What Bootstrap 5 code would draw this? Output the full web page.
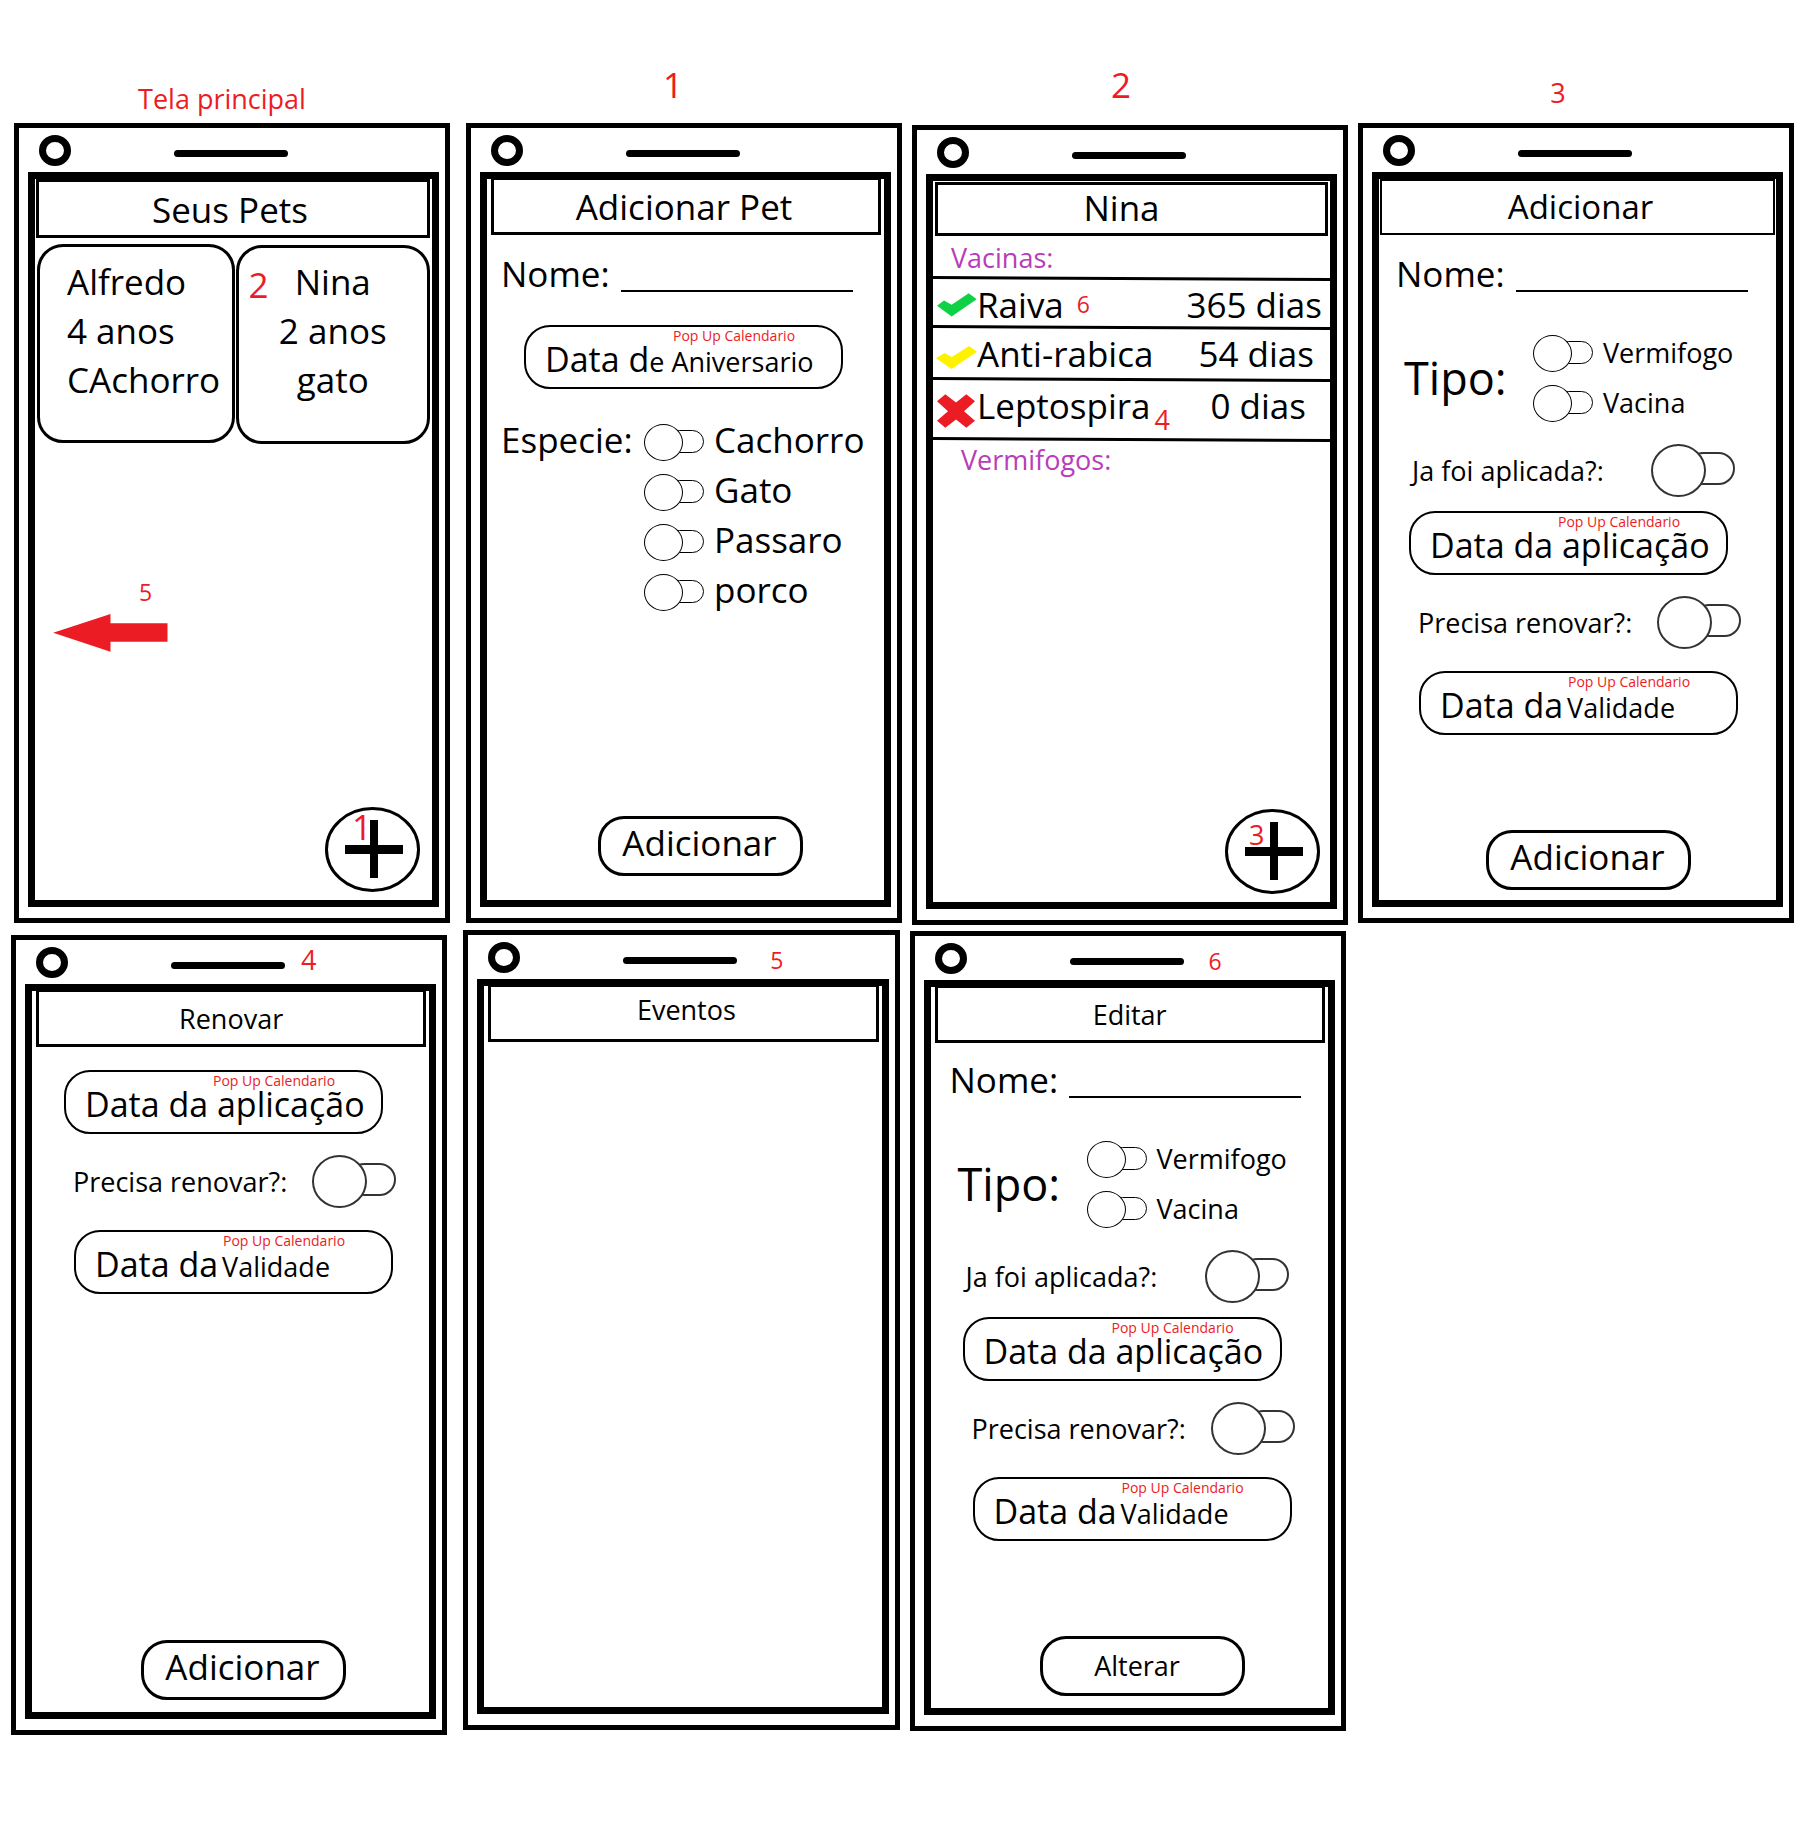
<!DOCTYPE html>
<html lang="pt-BR">
<head>
<meta charset="utf-8">
<meta name="viewport" content="width=device-width, initial-scale=1">
<title>Seus Pets</title>
<link href="https://cdn.jsdelivr.net/npm/bootstrap@5.3.0/dist/css/bootstrap.min.css" rel="stylesheet">
<style>
  :root { --ink: #000; --red: #ec1c24; --purple: #b83dba; }
  body { font-family: "Open Sans", "Noto Sans", sans-serif; color: var(--ink); background: #fff; }

  /* type scale */
  .t-xs { font-size: 14px; line-height: 16px; }
  .t-sm { font-size: 23px; line-height: 30px; }
  .t-md { font-size: 27px; line-height: 30px; }
  .t-date { font-size: 34px; line-height: 40px; }
  .t-title { font-size: 33px; line-height: 40px; }
  .t-lg { font-size: 35px; line-height: 40px; }
  .t-xl { font-size: 45px; line-height: 50px; }
  .t-red { color: var(--red); }
  .t-purple { color: var(--purple); }

  /* board */
  .board-top { padding: 0 26px 0 14px; }
  .board-bottom { padding: 5px 28px 0 11px; }
  .cell { flex: 1 1 0; min-width: 0; }
  .gap-wide { margin-right: 16px; }
  .gap-slim { margin-right: 10px; }
  .cap { height: 123px; padding: 0 22px 18px 0; }
  .cap-low { height: 123px; padding: 0 20px 9px 0; }
  .cap-tall { height: 125px; padding: 0 18px 20px 0; }
  .cap-side { height: 123px; padding: 0 36px 15px 0; }
  .drop { padding-top: 5px; }
  .drop-slim { padding-top: 1px; }

  /* phone */
  .phone { border: 5px solid var(--ink); padding: 0 6px 11px 9px; }
  .phone-bar { height: 44px; padding: 5px 0 0 11px; }
  .cam { width: 32px; height: 31px; margin-top: 2px; border: 7px solid var(--ink); border-radius: 50%; }
  .speaker { width: 114px; height: 7px; margin: 17px 16px 0 103px; border-radius: 4px; background: var(--ink); }
  .bar-note { padding: 5px 0 0 9px; }
  .screen { border: 7px solid var(--ink); min-height: 735px; }
  .head { border: 3px solid var(--ink); height: 58px; margin: -2px 3px 0 4px; padding-top: 2px; }
  .head-home { height: 59px; margin: 0 2px 0 1px; padding-right: 6px; }
  .head-pet { height: 54px; margin: 1px 2px 0 2px; padding: 0 20px 2px 0; }
  .head-thin { border-width: 2px; height: 56px; margin: 0 1px; padding: 0 0 0 6px; }
  .head-events { padding: 0 0 6px 6px; }
  .shift { padding-left: 2px; }
  .shift-up { margin-top: -2px; }

  /* home */
  .pets { padding: 6px 2px 0; gap: 1px; }
  .pet { flex: 1 1 0; min-width: 0; height: 199px; padding: 10px 0 0 27px; border: 3px solid var(--ink); border-radius: 26px; color: inherit; text-decoration: none; white-space: nowrap; }
  .pet .t-lg { line-height: 49px; }
  .pet-mid { flex-basis: 30px; padding: 9px 0 0; text-align: center; margin-top: 1px; }
  .pet-tag { left: 10px; top: 12px; }
  .swipe { padding: 133px 0 0 18px; }
  .swipe-n { padding-left: 86px; margin-bottom: 7px; }
  .fab-row { padding: 0 12px 8px 0; }
  .fab-row-pet { padding: 0 10px 8px 0; }
  .fab { width: 95px; height: 85px; border: 0; padding: 0; background: none; }
  .fab-n { left: 27px; top: 0; }
  .fab-n-md { left: 24px; top: 11px; }

  /* forms */
  .name-row { padding: 14px 0 0 14px; gap: 11px; }
  .name-row-b { padding-left: 17px; }
  .name-row label { line-height: 50px; margin-bottom: -2px; }
  .blank { width: 232px; height: 43px; border: 0; border-bottom: 2px solid var(--ink); padding: 0; background: none; outline: 0; border-radius: 0; }
  .date-btn { width: 319px; height: 64px; border: 2px solid var(--ink); border-radius: 26px; background: none; padding: 3px 0 0 19px; text-align: left; white-space: nowrap; color: inherit; }
  .date-tip { left: 147px; top: 1px; }
  .place-birth { padding: 28px 0 0 37px; }
  .place-applied { padding: 14px 0 0 30px; }
  .place-valid { padding: 22px 0 0 40px; }
  .place-first { padding: 23px 0 0 30px; }
  .kinds { padding: 26px 0 0 14px; }
  .kinds-label { width: 143px; line-height: 50px; }
  .opt { height: 50px; gap: 10px; }
  .kinds .tgl { margin-top: 4px; }
  .types { padding: 31px 0 0 25px; }
  .types-label { width: 129px; }
  .ask { height: 53px; }
  .ask-label { width: 239px; }
  .ask-applied { margin: 16px 0 0 33px; }
  .ask-renew { margin: 21px 0 0 39px; }
  .tgl { position: relative; appearance: none; flex: none; margin: 0; width: 60px; height: 37px; background: none; }
  .tgl::before, .tgl::after { content: ""; position: absolute; border: 1px solid var(--ink); background: #fff; }
  .tgl::before { left: 24px; right: 0; top: 6px; height: 23px; border-radius: 12px; }
  .tgl::after { left: 0; top: 0; width: 39px; height: 37px; border-radius: 50%; }
  .tgl-lg { width: 84px; height: 53px; }
  .tgl-lg::before, .tgl-lg::after { border: 2px solid #333; }
  .tgl-lg::before { left: 36px; top: 8px; height: 33px; border-radius: 17px; }
  .tgl-lg::after { width: 55px; height: 53px; }
  .main-btn { width: 205px; height: 60px; border: 3px solid var(--ink); border-radius: 26px; background: none; color: inherit; padding: 0 2px 6px 0; }
  .main-btn.t-md { padding: 0 10px 0 0; }
  .send { padding: 0 0 10px 107px; }
  .shift .send { padding-bottom: 12px; }
  .send-high { padding: 0 0 24px 111px; }

  /* vaccines */
  .vac { width: 100%; border-collapse: collapse; }
  .vac caption, .vac tr { background: url("data:image/svg+xml,%3Csvg xmlns='http://www.w3.org/2000/svg' viewBox='0 0 397 5' preserveAspectRatio='none'%3E%3Cpath d='M0 0L397 2V5L0 3Z'/%3E%3C/svg%3E") bottom / 100% 5px no-repeat; }
  .vac caption { caption-side: top; height: 45px; padding: 0 0 0 18px; line-height: 44px; }
  .vac td { padding: 0; vertical-align: top; line-height: 47px; white-space: nowrap; }
  .vac .r1 { height: 49px; } .vac .r2 { height: 52px; } .vac .r3 { height: 60px; }
  .vac .ico { width: 43px; padding: 12px 0 0 4px; }
  .vac .r2 .ico { padding: 16px 0 0 3px; }
  .ico svg { display: block; }
  .vac .up, .vac .down { line-height: 0; }
  .up { vertical-align: 5px; margin-left: 13px; }
  .down { vertical-align: -11px; margin-left: 4px; }
  .worm { padding-left: 28px; line-height: 36px; }

  @media (max-width: 1700px) {
    .board-top, .board-bottom { flex-wrap: wrap; }
    .cell { flex: 0 0 436px; }
  }
</style>
</head>
<body>
<main>
  <div class="board-top d-flex align-items-start">
    <section class="cell gap-wide">
      <div class="cap-low t-md t-red d-flex align-items-end justify-content-center">Tela principal</div>
      <div class="phone">
        <div class="phone-bar d-flex align-items-start"><span class="cam"></span><span class="speaker"></span></div>
        <div class="screen d-flex flex-column">
          <h1 class="head head-home t-lg fw-normal d-flex align-items-center justify-content-center">Seus Pets</h1>
          <div class="pets d-flex align-items-start">
            <a class="pet" href="#alfredo"><span class="t-lg d-block">Alfredo</span><span class="t-lg d-block">4 anos</span><span class="t-lg d-block">CAchorro</span></a>
            <a class="pet pet-mid position-relative" href="#nina"><span class="pet-tag position-absolute t-red t-lg">2</span><span class="t-lg d-block">Nina</span><span class="t-lg d-block">2 anos</span><span class="t-lg d-block">gato</span></a>
          </div>
          <div class="swipe">
            <div class="swipe-n t-sm t-red">5</div>
            <svg class="d-block" width="115" height="38" viewBox="158 162 344 114" fill="#ec1c24" role="img" aria-label="Deslizar"><path d="M158 218L330 162V190H501V245H330V275Z"/></svg>
          </div>
          <div class="fab-row mt-auto d-flex justify-content-end">
            <button class="fab position-relative" type="button" aria-label="Adicionar pet">
              <svg class="d-block" width="95" height="85" viewBox="0 0 190 170"><ellipse cx="95" cy="85" rx="92" ry="82" fill="#fff" stroke="#000" stroke-width="6"/><path d="M40 76h116v18H40zM90 26h16v116H90z"/></svg>
              <span class="fab-n position-absolute t-red t-lg">1</span>
            </button>
          </div>
        </div>
      </div>
    </section>

    <section class="cell gap-slim">
      <div class="cap t-lg t-red d-flex align-items-end justify-content-center">1</div>
      <div class="phone">
        <div class="phone-bar d-flex align-items-start"><span class="cam"></span><span class="speaker"></span></div>
        <form class="screen d-flex flex-column">
          <h2 class="head t-lg fw-normal d-flex align-items-center justify-content-center pe-1">Adicionar Pet</h2>
          <div class="name-row d-flex align-items-start"><label class="t-lg" for="pet-name">Nome:</label><input class="blank t-lg" id="pet-name" type="text"></div>
          <div class="place-birth"><button class="date-btn position-relative" type="button"><span class="date-tip position-absolute t-xs t-red">Pop Up Calendario</span><span class="t-date">Data d</span><span class="t-md">e Aniversario</span></button></div>
          <div class="kinds d-flex align-items-start">
            <span class="kinds-label t-lg">Especie:</span>
            <div>
              <div class="opt d-flex align-items-center"><input class="tgl" type="checkbox" id="k1"><label class="t-lg" for="k1">Cachorro</label></div>
              <div class="opt d-flex align-items-center"><input class="tgl" type="checkbox" id="k2"><label class="t-lg" for="k2">Gato</label></div>
              <div class="opt d-flex align-items-center"><input class="tgl" type="checkbox" id="k3"><label class="t-lg" for="k3">Passaro</label></div>
              <div class="opt d-flex align-items-center"><input class="tgl" type="checkbox" id="k4"><label class="t-lg" for="k4">porco</label></div>
            </div>
          </div>
          <div class="send-high mt-auto"><button class="main-btn t-lg d-block" type="button">Adicionar</button></div>
        </form>
      </div>
    </section>

    <section class="cell gap-slim">
      <div class="cap-tall t-lg t-red d-flex align-items-end justify-content-center">2</div>
      <div class="phone">
        <div class="phone-bar d-flex align-items-start"><span class="cam"></span><span class="speaker"></span></div>
        <div class="screen d-flex flex-column">
          <h2 class="head head-pet t-lg fw-normal d-flex align-items-center justify-content-center">Nina</h2>
          <table class="vac">
            <caption class="t-md t-purple">Vacinas:</caption>
            <tbody>
              <tr class="r1"><td class="ico"><svg width="40" height="24" viewBox="97 700 120 71" role="img" aria-label="Em dia"><path fill="#0ed145" d="M97 738L118 722L141 735L192 700L216 718L141 770Z"/></svg></td><td class="t-lg">Raiva<span class="up t-sm t-red">6</span></td><td class="t-lg text-end pe-2">365 dias</td></tr>
              <tr class="r2"><td class="ico"><svg width="41" height="23" viewBox="93 858 124 69" role="img" aria-label="Vence em breve"><path fill="#fff200" d="M93 895L119 879L141 891L193 858L217 875L140 927Z"/></svg></td><td class="t-lg">Anti-rabica</td><td class="t-lg text-end pe-3">54 dias</td></tr>
              <tr class="r3"><td class="ico"><svg width="38" height="34" viewBox="96 1002 114 101" role="img" aria-label="Vencida"><path fill="#ec1c24" d="M96 1023L121 1002L153 1027L184 1002L210 1023L177 1053L210 1082L184 1103L153 1078L121 1103L96 1082L129 1053Z"/></svg></td><td class="t-lg">Leptospira<span class="down t-md t-red">4</span></td><td class="t-lg text-end pe-4">0 dias</td></tr>
            </tbody>
          </table>
          <div class="worm t-purple t-md">Vermifogos:</div>
          <div class="fab-row-pet mt-auto d-flex justify-content-end">
            <button class="fab position-relative" type="button" aria-label="Adicionar vacina">
              <svg class="d-block" width="95" height="85" viewBox="0 0 190 170"><ellipse cx="95" cy="85" rx="92" ry="82" fill="#fff" stroke="#000" stroke-width="6"/><path d="M40 76h116v18H40zM90 26h16v116H90z"/></svg>
              <span class="fab-n-md position-absolute t-red t-md">3</span>
            </button>
          </div>
        </div>
      </div>
    </section>

    <section class="cell">
      <div class="cap-side t-md t-red d-flex align-items-end justify-content-center">3</div>
      <div class="phone">
        <div class="phone-bar d-flex align-items-start"><span class="cam"></span><span class="speaker"></span></div>
        <form class="screen d-flex flex-column">
          <h2 class="head head-thin t-title fw-normal d-flex align-items-center justify-content-center">Adicionar</h2>
          <div class="name-row name-row-b d-flex align-items-start"><label class="t-lg" for="vac-name">Nome:</label><input class="blank t-lg" id="vac-name" type="text"></div>
          <div class="types d-flex align-items-center">
            <span class="types-label t-xl">Tipo:</span>
            <div>
              <div class="opt d-flex align-items-center"><input class="tgl" type="checkbox" id="a1"><label class="t-md" for="a1">Vermifogo</label></div>
              <div class="opt d-flex align-items-center"><input class="tgl" type="checkbox" id="a2"><label class="t-md" for="a2">Vacina</label></div>
            </div>
          </div>
          <div class="ask ask-applied d-flex align-items-center"><label class="ask-label t-md" for="a3">Ja foi aplicada?:</label><input class="tgl tgl-lg" type="checkbox" id="a3"></div>
          <div class="place-applied"><button class="date-btn position-relative d-block" type="button"><span class="date-tip position-absolute t-xs t-red">Pop Up Calendario</span><span class="t-date">Data da aplicação</span></button></div>
          <div class="ask ask-renew d-flex align-items-center"><label class="ask-label t-md" for="a4">Precisa renovar?:</label><input class="tgl tgl-lg" type="checkbox" id="a4"></div>
          <div class="place-valid"><button class="date-btn position-relative d-block" type="button"><span class="date-tip position-absolute t-xs t-red">Pop Up Calendario</span><span class="t-date">Data da</span><span class="t-md ms-1">Validade</span></button></div>
          <div class="send mt-auto"><button class="main-btn t-lg d-block" type="button">Adicionar</button></div>
        </form>
      </div>
    </section>
  </div>

  <div class="board-bottom d-flex align-items-start">
    <section class="cell gap-wide drop">
      <div class="phone">
        <div class="phone-bar d-flex align-items-start"><span class="cam"></span><span class="speaker"></span><span class="t-md t-red">4</span></div>
        <form class="screen d-flex flex-column">
          <h2 class="head t-md fw-normal d-flex align-items-center justify-content-center">Renovar</h2>
          <div class="shift d-flex flex-column flex-grow-1">
            <div class="place-first"><button class="date-btn position-relative d-block" type="button"><span class="date-tip position-absolute t-xs t-red">Pop Up Calendario</span><span class="t-date">Data da aplicação</span></button></div>
            <div class="ask ask-renew d-flex align-items-center"><label class="ask-label t-md" for="b1">Precisa renovar?:</label><input class="tgl tgl-lg" type="checkbox" id="b1"></div>
            <div class="place-valid"><button class="date-btn position-relative d-block" type="button"><span class="date-tip position-absolute t-xs t-red">Pop Up Calendario</span><span class="t-date">Data da</span><span class="t-md ms-1">Validade</span></button></div>
            <div class="send mt-auto"><button class="main-btn t-lg d-block" type="button">Adicionar</button></div>
          </div>
        </form>
      </div>
    </section>

    <section class="cell gap-slim">
      <div class="phone">
        <div class="phone-bar d-flex align-items-start"><span class="cam"></span><span class="speaker"></span><span class="bar-note ms-2 t-sm t-red">5</span></div>
        <div class="screen d-flex flex-column">
          <h2 class="head head-events t-md fw-normal d-flex align-items-center justify-content-center">Eventos</h2>
        </div>
      </div>
    </section>

    <section class="cell gap-slim drop-slim">
      <div class="phone">
        <div class="phone-bar d-flex align-items-start"><span class="cam"></span><span class="speaker"></span><span class="bar-note t-sm t-red">6</span></div>
        <form class="screen d-flex flex-column">
          <h2 class="head t-md fw-normal d-flex align-items-center justify-content-center">Editar</h2>
          <div class="shift shift-up d-flex flex-column flex-grow-1">
            <div class="name-row name-row-b d-flex align-items-start"><label class="t-lg" for="edit-name">Nome:</label><input class="blank t-lg" id="edit-name" type="text"></div>
            <div class="types d-flex align-items-center">
              <span class="types-label t-xl">Tipo:</span>
              <div>
                <div class="opt d-flex align-items-center"><input class="tgl" type="checkbox" id="c1"><label class="t-md" for="c1">Vermifogo</label></div>
                <div class="opt d-flex align-items-center"><input class="tgl" type="checkbox" id="c2"><label class="t-md" for="c2">Vacina</label></div>
              </div>
            </div>
            <div class="ask ask-applied d-flex align-items-center"><label class="ask-label t-md" for="c3">Ja foi aplicada?:</label><input class="tgl tgl-lg" type="checkbox" id="c3"></div>
            <div class="place-applied"><button class="date-btn position-relative d-block" type="button"><span class="date-tip position-absolute t-xs t-red">Pop Up Calendario</span><span class="t-date">Data da aplicação</span></button></div>
            <div class="ask ask-renew d-flex align-items-center"><label class="ask-label t-md" for="c4">Precisa renovar?:</label><input class="tgl tgl-lg" type="checkbox" id="c4"></div>
            <div class="place-valid"><button class="date-btn position-relative d-block" type="button"><span class="date-tip position-absolute t-xs t-red">Pop Up Calendario</span><span class="t-date">Data da</span><span class="t-md ms-1">Validade</span></button></div>
            <div class="send mt-auto"><button class="main-btn t-md d-block" type="button">Alterar</button></div>
          </div>
        </form>
      </div>
    </section>
    <div class="cell"></div>
  </div>
</main>
<script src="https://cdn.jsdelivr.net/npm/bootstrap@5.3.0/dist/js/bootstrap.bundle.min.js"></script>
</body>
</html>
